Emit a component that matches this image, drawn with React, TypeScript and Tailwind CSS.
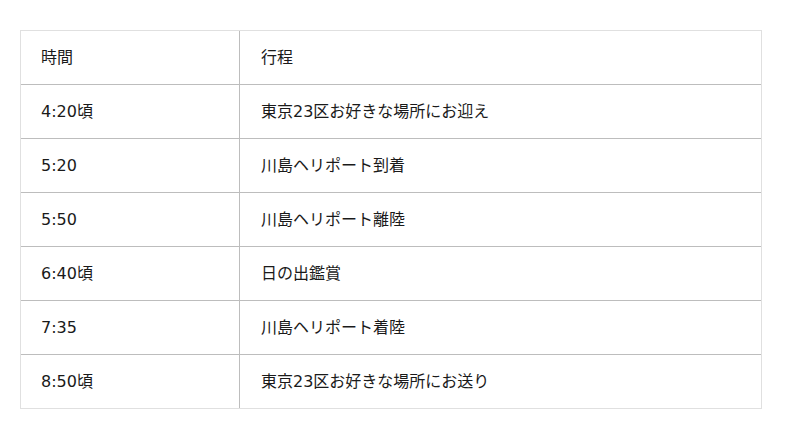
import React from "react";

const rows: [string, string][] = [
  ["時間", "行程"],
  ["4:20頃", "東京23区お好きな場所にお迎え"],
  ["5:20", "川島ヘリポート到着"],
  ["5:50", "川島ヘリポート離陸"],
  ["6:40頃", "日の出鑑賞"],
  ["7:35", "川島ヘリポート着陸"],
  ["8:50頃", "東京23区お好きな場所にお送り"],
];

export default function App() {
  return (
    <div
      className="w-[800px] h-[439px] bg-white pt-[30px] pl-[20px]"
      style={{ fontFamily: '"DejaVu Sans", "Noto Sans CJK JP", sans-serif' }}
    >
      <div className="w-[742px] border border-[#e0e0e0]">
        {rows.map(([t, d], i) => (
          <div
            key={i}
            className={`flex items-center text-[16px] text-[#1a1a1a] ${
              i > 0 ? "border-t border-[#bdbdbd] h-[54px]" : "h-[53px]"
            }`}
          >
            <div className="w-[219px] h-full flex items-center pl-[20px] pt-[1px] border-r border-[#bdbdbd]">
              {t}
            </div>
            <div className="flex-1 h-full flex items-center pl-[21px] pt-[1px]">{d}</div>
          </div>
        ))}
      </div>
    </div>
  );
}
